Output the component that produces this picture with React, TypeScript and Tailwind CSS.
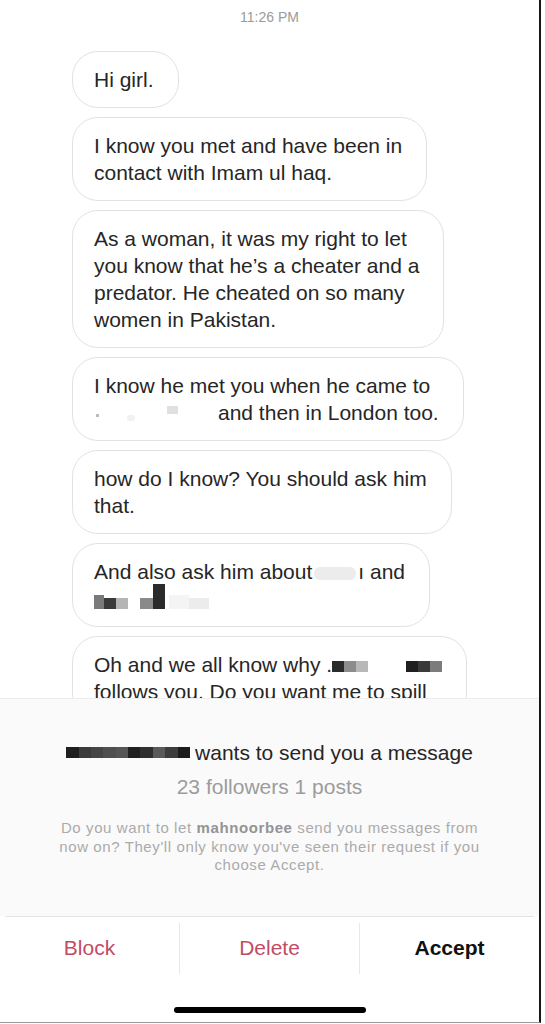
import type { ReactNode } from "react";

function Bubble({ children }: { children: ReactNode }) {
  return (
    <div className="shrink-0 rounded-[26px] border border-[#e2e2e2] bg-white py-[14px] pl-[21px] pr-[24px] text-[21px] leading-[27px] text-[#262626] whitespace-nowrap">
      {children}
    </div>
  );
}

// pixelated blocks standing in for the blurred-out names
function Blocks({ colors, w = 12, h = 11 }: { colors: string[]; w?: number; h?: number }) {
  return (
    <span className="inline-flex align-middle">
      {colors.map((c, i) => (
        <span
          key={i}
          className="inline-block"
          style={{ width: w, height: h, backgroundColor: c }}
        />
      ))}
    </span>
  );
}

export default function App() {
  return (
    <div className="w-[545px] h-[1024px] bg-white font-['Liberation_Sans',Arial,sans-serif]">
      <div className="flex h-[1023px] w-[541px] flex-col border-r-2 border-b border-r-[#161616] border-b-[#9a9a9a]">
        {/* conversation */}
        <div className="min-h-0 flex-1 overflow-hidden">
          <div className="pt-[7px] text-center text-[14px] leading-[20px] text-[#9b9b9b]">
            11:26 PM
          </div>

          <div className="mt-[24px] flex flex-col items-start gap-[9px] pl-[72px]">
            <Bubble>Hi girl.</Bubble>
            <Bubble>
              I know you met and have been in
              <br />
              contact with Imam ul haq.
            </Bubble>
            <Bubble>
              As a woman, it was my right to let
              <br />
              you know that he’s a cheater and a
              <br />
              predator. He cheated on so many
              <br />
              women in Pakistan.
            </Bubble>
            <Bubble>
              I know he met you when he came to
              <br />
              <span className="inline-flex h-[27px] w-[124px] items-center align-top">
                <span className="ml-[2px] mt-[6px] h-[3px] w-[3px] bg-[#bdbdbd]" />
                <span className="ml-[28px] mt-[10px] h-[6px] w-[8px] rounded-sm bg-[#f1f1f1]" />
                <span className="ml-[32px] -mt-[6px] h-[8px] w-[11px] bg-[#e0e0e0]" />
              </span>
              and then in London too.
            </Bubble>
            <Bubble>
              how do I know? You should ask him
              <br />
              that.
            </Bubble>
            <Bubble>
              And also ask him about
              <span className="mx-[2px] inline-block h-[13px] w-[42px] rounded-md bg-[#ececec] align-middle" />
              ı and
              <br />
              <span className="inline-flex h-[27px] items-end pb-[3px] align-top">
                <span className="h-[14px] w-[10px] bg-[#7a7a7a]" />
                <span className="h-[11px] w-[12px] bg-[#3a3a3a]" />
                <span className="h-[11px] w-[12px] bg-[#b5b5b5]" />
                <span className="ml-[12px] h-[11px] w-[13px] bg-[#8a8a8a]" />
                <span className="h-[25px] w-[12px] bg-[#2b2b2b]" />
                <span className="ml-[4px] h-[14px] w-[20px] bg-[#f4f4f4]" />
                <span className="h-[11px] w-[20px] bg-[#ececec]" />
              </span>
            </Bubble>
            <Bubble>
              Oh and we all know why .
              <Blocks colors={["#2a2a2a", "#8c8c8c", "#b8b8b8"]} />
              <span className="inline-block w-[38px]" />
              <Blocks colors={["#1f1f1f", "#3a3a3a", "#7c7c7c"]} w={12} h={11} />
              <br />
              follows you. Do you want me to spill
            </Bubble>
          </div>
        </div>

        {/* message request sheet */}
        <div className="h-[324px] shrink-0">
          <div className="flex h-[218px] flex-col items-center border-t border-[#ededed] bg-[#fafafa] pt-[40px]">
            <div className="flex items-center text-[21px] leading-[27px] text-[#262626]">
              <span className="mr-[5px] inline-flex">
                {["#1e1e1e", "#3b3b3b", "#454545", "#4f4f4f", "#555555", "#202020", "#2f2f2f", "#5a5a5a", "#3d3d3d", "#1c1c1c"].map((c, i) => (
                  <span key={i} className="inline-block h-[11px] w-[12.4px]" style={{ backgroundColor: c }} />
                ))}
              </span>
              wants to send you a message
            </div>
            <div className="mt-[7px] text-[21px] leading-[27px] text-[#9c9c9c]">
              23 followers 1 posts
            </div>
            <p className="mt-[19px] text-center text-[15px] leading-[18.5px] tracking-[0.6px] text-[#ababab]">
              Do you want to let <span className="font-bold text-[#949494]">mahnoorbee</span> send you messages from
              <br />
              now on? They'll only know you've seen their request if you
              <br />
              choose Accept.
            </p>
          </div>
          <div className="mx-[5px] h-px bg-[#e4e4e4]" />
          <div className="flex h-[62px] items-center">
            <button className="flex h-full flex-1 items-center justify-center text-[21px] text-[#c24c64]">
              Block
            </button>
            <div className="h-[51px] w-px bg-[#e8e8e8]" />
            <button className="flex h-full flex-1 items-center justify-center text-[21px] text-[#c24c64]">
              Delete
            </button>
            <div className="h-[51px] w-px bg-[#e8e8e8]" />
            <button className="flex h-full flex-1 items-center justify-center text-[21px] font-semibold text-[#111111]">
              Accept
            </button>
          </div>
          <div className="mx-auto mt-[28px] h-[6px] w-[192px] rounded-full bg-black" />
        </div>
      </div>
    </div>
  );
}
